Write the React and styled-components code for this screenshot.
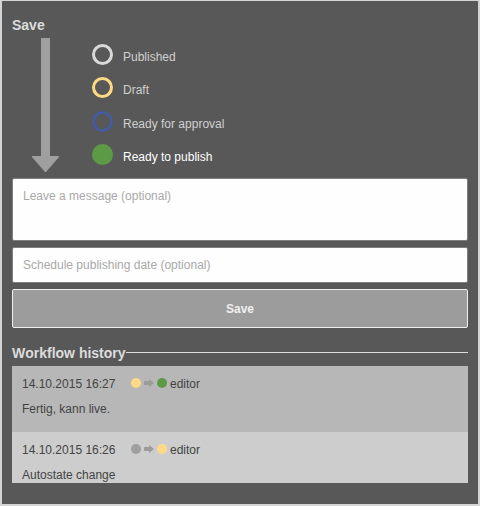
import React, { useState } from "react";
import styled, { createGlobalStyle } from "styled-components";

const GlobalStyle = createGlobalStyle`
  *, *::before, *::after { box-sizing: border-box; }
  body {
    margin: 0;
    background: #d5d5d5;
    font: 12px/18px "Liberation Sans", Arial, sans-serif;
    font-kerning: none;
    text-rendering: optimizeSpeed;
  }
`;

const colors = {
  published: "#d9d9d9",
  draft: "#ffda84",
  approval: "#455b9b",
  ready: "#5c9a46",
  neutral: "#9f9f9f",
};

const Panel = styled.main`
  display: flex;
  flex-direction: column;
  border: 2px solid #d5d5d5;
  border-top-width: 1px;
  padding: 14px 10px 21px;
  background: #585858;
`;

const Title = styled.h2`
  margin: 0;
  font-size: 14px;
  line-height: 20px;
  color: #dcdcdc;
`;

const WorkflowForm = styled.form`
  display: flex;
  flex-direction: column;
  gap: 6px;
`;

const Workflow = styled.div`
  display: flex;
  gap: 33px;
  padding: 3px 20px 0;
`;

const DirectionArrow = styled.svg`
  flex: none;
  width: 27px;
  height: 134px;
  fill: #9f9f9f;
`;

const States = styled.fieldset`
  display: flex;
  flex-direction: column;
  justify-content: space-between;
  margin: 0;
  border: 0;
  padding: 6px 0 7px;
`;

const State = styled.label`
  display: flex;
  align-items: center;
  gap: 10px;
  height: 21px;
  cursor: pointer;
`;

const StateRadio = styled.input`
  appearance: none;
  flex: none;
  width: 21px;
  height: 21px;
  margin: 0;
  border: 3px solid ${(p) => p.$color};
  border-radius: 50%;
  cursor: pointer;

  &:checked { background: ${(p) => p.$color}; }
`;

const StateName = styled.span`
  padding-top: 5px;
  line-height: 16px;
  color: #d0d0d0;

  ${StateRadio}:checked + & { color: #fff; }
`;

const fieldStyle = `
  display: block;
  width: 100%;
  margin: 0;
  border: 1px solid #7f7f7f;
  border-radius: 2px;
  padding: 8px 10px;
  background: #fefefe;
  color: #444;
  font: inherit;
  font-kerning: inherit;
  text-rendering: inherit;

  &::placeholder { color: #a9a9a9; opacity: 1; }
`;

const Message = styled.textarea`
  ${fieldStyle}
  height: 63px;
  resize: none;
`;

const DateField = styled.input`
  ${fieldStyle}
  height: 36px;
`;

const SaveButton = styled.button`
  height: 39px;
  border: 1px solid #f0f0f0;
  border-radius: 2px;
  padding: 0 10px;
  background: #9c9c9c;
  color: #f0f0f0;
  font: inherit;
  font-weight: bold;
  cursor: pointer;
`;

const HistoryHeader = styled.header`
  display: flex;
  align-items: center;
  margin: 15px 0 3px;

  &::after {
    content: "";
    flex: 1;
    height: 1px;
    margin-bottom: 1px;
    background: #dcdcdc;
  }
`;

const History = styled.ol`
  height: 117px;
  margin: 0;
  padding: 0;
  overflow-y: auto;
  scrollbar-width: none;
  list-style: none;
`;

const Entry = styled.li`
  height: 66px;
  padding: 9px 10px;
  background: #cdcdcd;
  color: #444;

  &:nth-child(odd) { background: #b7b7b7; }
`;

const EntryMeta = styled.div`
  display: flex;
  align-items: center;
`;

const Time = styled.time`
  width: 109px;
`;

const Transition = styled.span`
  display: flex;
  align-items: center;
  gap: 3px;
  margin-right: 3px;
  padding-bottom: 2px;
`;

const Dot = styled.span`
  width: 10px;
  height: 10px;
  border-radius: 50%;
  background: ${(p) => p.$color};
`;

const StepArrow = styled.svg`
  width: 10px;
  height: 10px;
  fill: #9c9c9c;
`;

const EntryText = styled.p`
  margin: 7px 0 0;
`;

const states = [
  { id: "published", label: "Published" },
  { id: "draft", label: "Draft" },
  { id: "approval", label: "Ready for approval" },
  { id: "ready", label: "Ready to publish" },
];

const history = [
  { time: "14.10.2015 16:27", from: "draft", to: "ready", user: "editor", text: "Fertig, kann live." },
  { time: "14.10.2015 16:26", from: "neutral", to: "draft", user: "editor", text: "Autostate change" },
];

export default function App() {
  const [selected, setSelected] = useState("ready");

  return (
    <>
      <GlobalStyle />
      <Panel>
        <Title>Save</Title>
        <WorkflowForm onSubmit={(e) => e.preventDefault()}>
          <Workflow>
            <DirectionArrow viewBox="0 0 27 134" aria-hidden="true">
              <path d="M9 0h9v118h9v1L14 134h-1L0 119v-1h9z" />
            </DirectionArrow>
            <States aria-label="Workflow state">
              {states.map(({ id, label }) => (
                <State key={id}>
                  <StateRadio
                    type="radio"
                    name="state"
                    value={id}
                    $color={colors[id]}
                    checked={selected === id}
                    onChange={() => setSelected(id)}
                  />
                  <StateName>{label}</StateName>
                </State>
              ))}
            </States>
          </Workflow>
          <Message aria-label="Message" placeholder="Leave a message (optional)" />
          <DateField aria-label="Publishing date" type="text" placeholder="Schedule publishing date (optional)" />
          <SaveButton type="submit">Save</SaveButton>
        </WorkflowForm>
        <HistoryHeader>
          <Title>Workflow history</Title>
        </HistoryHeader>
        <History>
          {history.map((entry) => (
            <Entry key={entry.time}>
              <EntryMeta>
                <Time>{entry.time}</Time>
                <Transition aria-hidden="true">
                  <Dot $color={colors[entry.from]} />
                  <StepArrow viewBox="0 0 10 10">
                    <path d="M0 3h5V1l5 4-5 4V7H0z" />
                  </StepArrow>
                  <Dot $color={colors[entry.to]} />
                </Transition>
                {entry.user}
              </EntryMeta>
              <EntryText>{entry.text}</EntryText>
            </Entry>
          ))}
        </History>
      </Panel>
    </>
  );
}
